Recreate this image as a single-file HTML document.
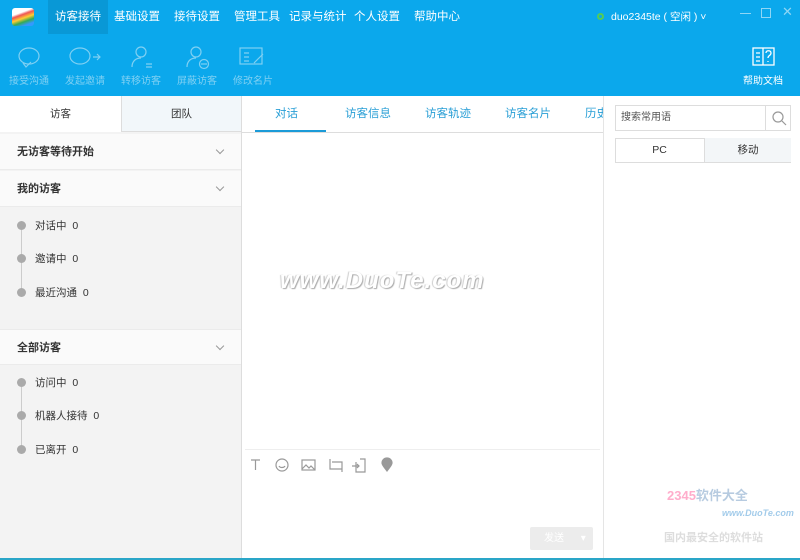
<!DOCTYPE html><html><head><meta charset="utf-8"><style>
*{margin:0;padding:0;box-sizing:border-box}
body{width:800px;height:560px;overflow:hidden;font-family:"Liberation Sans","Noto Sans CJK SC",sans-serif;font-size:11px;color:#333;background:#fff;position:relative}
.a{position:absolute}
.hdr{left:0;top:0;width:800px;height:96px;background:#0ba8ec}
.menu{top:0;height:34px;line-height:34px;color:#fff;font-size:11.5px}
.tb{color:#7fd0f3;font-size:10px;text-align:center;width:50px}
.sec{left:0;width:241px;height:36px;background:#fafafa;border-bottom:1px solid #ebebeb;font-weight:bold;font-size:11px;line-height:36px;padding-left:17px}
.sec:after{content:"";position:absolute;right:18px;top:13px;width:5px;height:5px;border-right:1px solid #999;border-bottom:1px solid #999;transform:rotate(45deg)}
.it{left:17px;font-size:10.5px;height:14px;line-height:14px}
.it:before{content:"";display:inline-block;width:9px;height:9px;border-radius:50%;background:#aaa;margin-right:9px;vertical-align:-1px}
.ct{top:96px;height:36px;line-height:36px;color:#2a9fd6;font-size:11.5px}
</style></head><body>
<div class="a hdr"></div>
<div class="a" style="left:12px;top:8px;width:22px;height:18px;background:linear-gradient(160deg,#fff 30%,#e55 40%,#fc3 55%,#3a5 70%,#39f 85%);border-radius:3px"></div>
<div class="a" style="left:48px;top:0;width:60px;height:34px;background:#0998d6"></div>
<div class="a menu" style="left:55px">访客接待</div>
<div class="a menu" style="left:114px">基础设置</div>
<div class="a menu" style="left:174px">接待设置</div>
<div class="a menu" style="left:234px">管理工具</div>
<div class="a menu" style="left:289px">记录与统计</div>
<div class="a menu" style="left:354px">个人设置</div>
<div class="a menu" style="left:414px">帮助中心</div>
<div class="a" style="left:597px;top:13px;width:7px;height:7px;border-radius:50%;border:2px solid #5c5;background:#0ba8ec"></div>
<div class="a menu" style="left:611px;font-size:10.5px">duo2345te ( 空闲 ) ˅</div>
<div class="a" style="left:740px;top:13px;width:11px;height:1px;background:#8fd6f5"></div>
<div class="a" style="left:761px;top:8px;width:10px;height:10px;border:1px solid #8fd6f5"></div>
<div class="a" style="left:782px;top:2px;color:#8fd6f5;font-size:13px;line-height:20px">✕</div>
<svg class="a" style="left:0;top:44px" width="300" height="30" fill="none" stroke="#7fd0f3" stroke-width="1.2">
<ellipse cx="29" cy="12" rx="10" ry="8"/><path d="M23 19l3 4 5-5"/>
<ellipse cx="80" cy="12" rx="10" ry="8"/><path d="M93 13h7m-3-3l3 3-3 3"/>
<circle cx="141" cy="8" r="5"/><path d="M132 23c0-6 4-9 9-9M146 20h6m-6 3h6"/>
<circle cx="196" cy="8" r="5"/><path d="M187 23c0-6 4-9 9-9"/><circle cx="204" cy="20" r="4.5"/><path d="M201 20h6"/>
<rect x="240" y="4" width="22" height="16"/><path d="M244 9h5m-5 4h5m-5 4h5M254 19l9-9"/>
</svg>
<div class="a tb" style="left:4px;top:72px">接受沟通</div>
<div class="a tb" style="left:60px;top:72px">发起邀请</div>
<div class="a tb" style="left:116px;top:72px">转移访客</div>
<div class="a tb" style="left:172px;top:72px">屏蔽访客</div>
<div class="a tb" style="left:228px;top:72px">修改名片</div>
<svg class="a" style="left:752px;top:47px" width="24" height="20" fill="none" stroke="#fff" stroke-width="1.3"><rect x="1" y="1" width="21" height="17"/><path d="M11 1v17M4 6h4m-4 4h4m-4 4h4M14 6c0-3 5-3 5 0s-3 2-3 5m0 3v1"/></svg>
<div class="a" style="left:743px;top:72px;color:#fff;font-size:10px">帮助文档</div>
<div class="a" style="left:0;top:96px;width:242px;height:464px;background:#f3f3f3;border-right:1px solid #ddd"></div>
<div class="a" style="left:0;top:96px;width:121px;height:36px;background:#fff;text-align:center;line-height:36px;font-size:10.5px">访客</div>
<div class="a" style="left:121px;top:96px;width:120px;height:36px;background:#f2f7fa;border-left:1px solid #ddd;border-bottom:1px solid #ddd;text-align:center;line-height:36px;font-size:10.5px">团队</div>
<div class="a sec" style="top:134px">无访客等待开始</div>
<div class="a sec" style="top:171px">我的访客</div>
<div class="a" style="left:21px;top:230px;width:1px;height:62px;background:#ccc"></div>
<div class="a it" style="top:219px">对话中 &nbsp;0</div>
<div class="a it" style="top:252px">邀请中 &nbsp;0</div>
<div class="a it" style="top:286px">最近沟通 &nbsp;0</div>
<div class="a sec" style="top:329px;border-top:1px solid #ebebeb">全部访客</div>
<div class="a" style="left:21px;top:387px;width:1px;height:62px;background:#ccc"></div>
<div class="a it" style="top:376px">访问中 &nbsp;0</div>
<div class="a it" style="top:409px">机器人接待 &nbsp;0</div>
<div class="a it" style="top:443px">已离开 &nbsp;0</div>
<div class="a" style="left:242px;top:132px;width:361px;height:1px;background:#ddd"></div>
<div class="a" style="left:255px;top:130px;width:71px;height:2px;background:#1b9bd8"></div>
<div class="a ct" style="left:275px">对话</div>
<div class="a ct" style="left:345px">访客信息</div>
<div class="a ct" style="left:425px">访客轨迹</div>
<div class="a ct" style="left:505px">访客名片</div>
<div class="a ct" style="left:585px;width:18px;overflow:hidden;white-space:nowrap">历史</div>
<div class="a" style="left:280px;top:267px;font-size:24px;font-weight:bold;font-style:italic;color:#fff;text-shadow:1px 1px 1px #aaa,-1px 0 1px #ccc;letter-spacing:1px;font-family:'Liberation Sans',sans-serif">www.DuoTe.com</div>
<div class="a" style="left:245px;top:449px;width:355px;height:1px;background:#eee"></div>
<svg class="a" style="left:248px;top:456px" width="150" height="18" fill="none" stroke="#999" stroke-width="1.2">
<path d="M3 4h9M7.5 4v10"/><circle cx="34" cy="9" r="6"/><path d="M31 10c1 2 5 2 6 0"/>
<rect x="54" y="4" width="13" height="10"/><path d="M54 13l4-4 3 3 2-2 4 4"/>
<path d="M82 3v10h12M84 6h10v10"/><path d="M108 6v10h9V3h-5M104 10h7m-2-2l2 2-2 2"/>
<path d="M139 15c-3-4-5-6-5-8a5 5 0 0 1 10 0c0 2-2 4-5 8z" fill="#999"/></svg>
<div class="a" style="left:530px;top:527px;width:63px;height:23px;background:#ececec;border-radius:2px;color:#fff;font-size:10px;line-height:23px;padding-left:14px">发送 <span style="margin-left:14px">▾</span></div>
<div class="a" style="left:603px;top:96px;width:1px;height:464px;background:#e5e5e5"></div>
<div class="a" style="left:615px;top:105px;width:176px;height:26px;border:1px solid #ddd;color:#555;font-size:10px;line-height:24px;padding-left:5px">搜索常用语</div>
<div class="a" style="left:765px;top:105px;width:1px;height:26px;background:#ddd"></div>
<svg class="a" style="left:771px;top:110px" width="16" height="16" fill="none" stroke="#999" stroke-width="1.2"><circle cx="7" cy="7" r="5"/><path d="M11 11l4 4"/></svg>
<div class="a" style="left:615px;top:138px;width:176px;height:25px;border:1px solid #ddd"></div>
<div class="a" style="left:704px;top:138px;width:87px;height:24px;background:#f3f6f8;border-left:1px solid #ddd;text-align:center;line-height:24px;font-size:10.5px">移动</div>
<div class="a" style="left:615px;top:138px;width:89px;text-align:center;line-height:25px;font-size:10.5px">PC</div>
<div class="a" style="left:667px;top:485px;font-size:13px;font-weight:bold;color:#f7a;opacity:.6">2345<span style="color:#8ac">软件大全</span></div>
<div class="a" style="left:722px;top:508px;font-size:9px;font-style:italic;font-weight:bold;color:#6ad;opacity:.6">www.DuoTe.com</div>
<div class="a" style="left:664px;top:529px;font-size:11px;font-weight:bold;color:#ddd">国内最安全的软件站</div>
<div class="a" style="left:0;top:558px;width:800px;height:2px;background:#2aa6c8"></div>
</body></html>
